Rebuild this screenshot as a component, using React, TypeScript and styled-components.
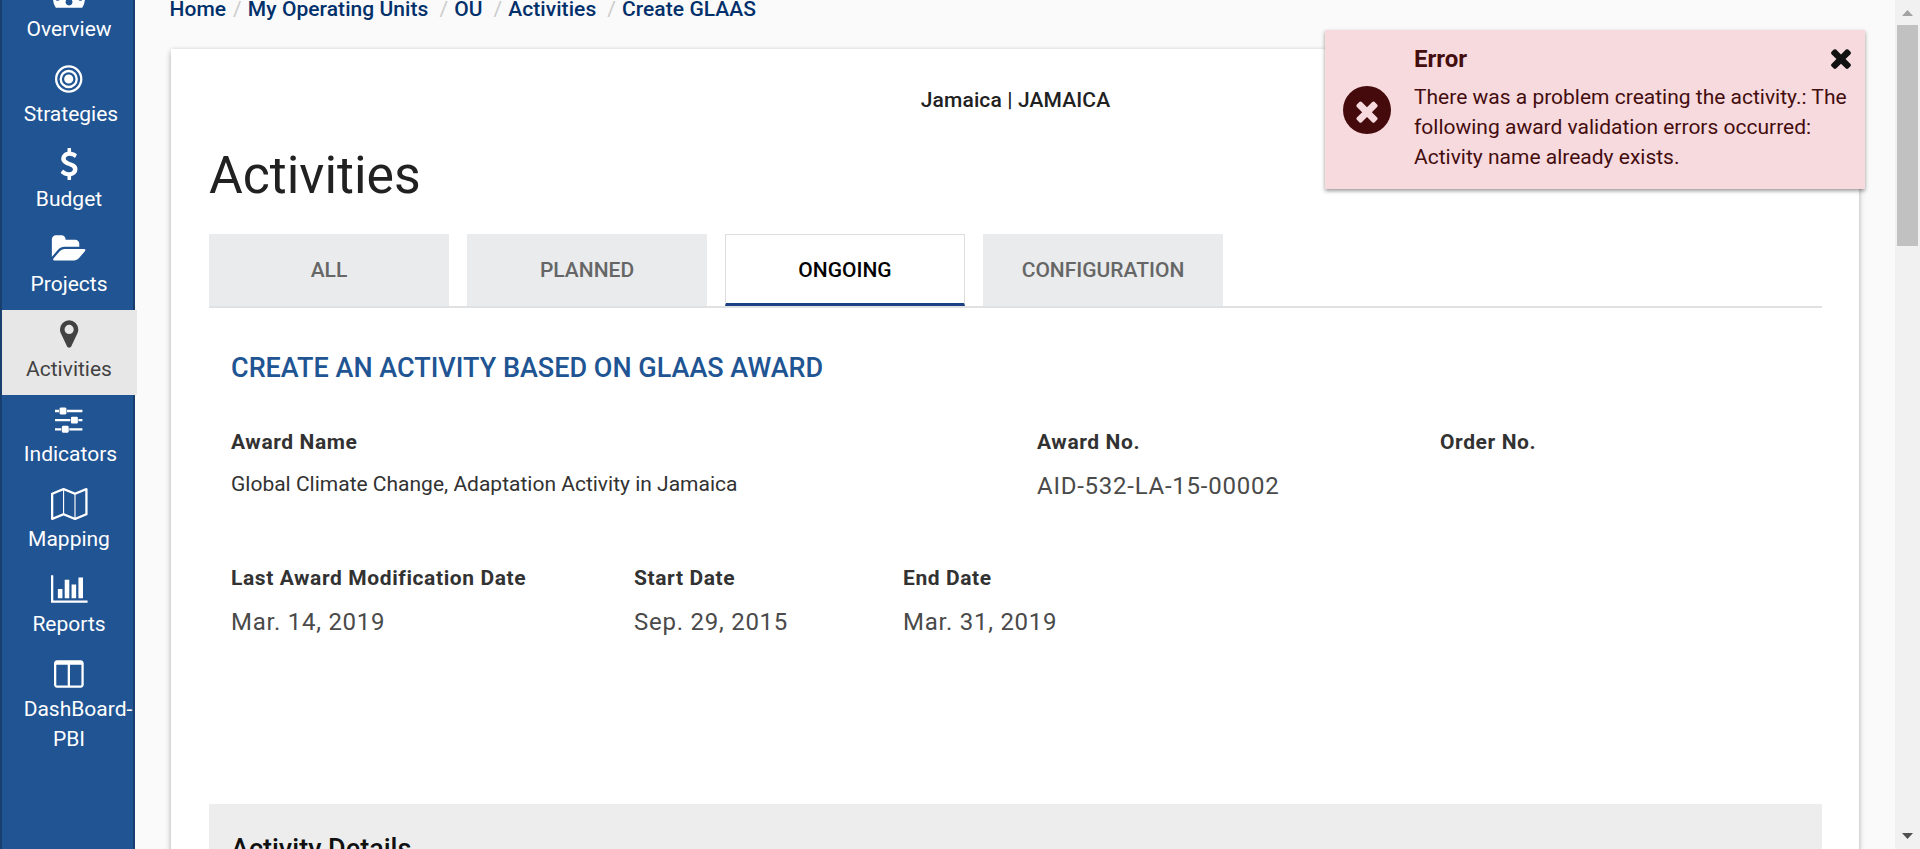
import React from "react";
import styled, { createGlobalStyle, css } from "styled-components";

const GlobalStyle = createGlobalStyle`
  *, *::before, *::after { box-sizing: border-box; }
  html, body { margin: 0; padding: 0; overflow: hidden; background: #fafafa; }
  body { font-family: Roboto, "Liberation Sans", sans-serif; font-size: 21px; line-height: 30px; color: #212121; }
  h1, h2, h3, p, ul, dl, dd { margin: 0; padding: 0; font-weight: 400; }
  a { color: inherit; text-decoration: none; }
`;

const Shell = styled.div`
  position: relative;
  display: flex;
  height: 849px;
  overflow: hidden;
`;

const Sidebar = styled.nav`
  flex: none;
  width: 135px;
  background: #205493;
  border: solid #193e70;
  border-width: 0 2px;
`;

const NavList = styled.ul`
  list-style: none;
  margin-top: -30px;
`;

const NavItem = styled.li<{ $active?: boolean; $tall?: boolean }>`
  display: flex;
  flex-direction: column;
  align-items: center;
  width: 135px;
  height: ${(p) => (p.$tall ? 115 : 85)}px;
  padding: 8px 1px 0 0;
  color: #fff;
  text-align: center;
  ${(p) =>
    p.$active &&
    css`
      background: #e7e7e7;
      color: #424242;
    `}
`;

const NavIcon = styled.svg`
  flex: none;
  display: block;
  height: 32px;
  overflow: visible;
  fill: currentColor;
`;

const NavLabel = styled.span<{ $shift?: number }>`
  margin-top: 4px;
  padding-left: ${(p) => p.$shift ?? 0}px;
  font-size: 21px;
  line-height: 30px;
`;

const Main = styled.main`
  flex: 1;
  min-width: 0;
  padding: 0 36px 0 36px;
`;

const Breadcrumbs = styled.div`
  display: flex;
  height: 30px;
  margin: -6px 0 25px -1.5px;
  color: #112e51;
  font-weight: 500;
  white-space: pre;
  letter-spacing: 0.06px;
`;

const Crumb = styled.a`
  color: #02306b;
`;

const CrumbSlash = styled.span<{ $before: number; $after: number }>`
  padding: 0 ${(p) => p.$after}px 0 ${(p) => p.$before}px;
  color: #ccc;
  font-weight: 400;
`;

const Card = styled.section`
  height: 900px;
  padding: 34px 37px 0 38px;
  background: #fff;
  box-shadow: 0 3px 6px rgba(0, 0, 0, 0.24), 0 0 4px rgba(0, 0, 0, 0.1);
`;

const UnitName = styled.p`
  height: 34px;
  text-align: center;
  font-size: 21px;
  line-height: 34px;
  font-weight: 500;
  letter-spacing: 0.12px;
`;

const PageTitle = styled.h1`
  height: 72px;
  margin-top: 23px;
  font-size: 51.75px;
  line-height: 71px;
`;

const TabBar = styled.div`
  display: flex;
  gap: 18px;
  height: 74px;
  margin-top: 22px;
  border-bottom: 2px solid #e0e1e2;
`;

const Tab = styled.div<{ $active?: boolean }>`
  display: flex;
  align-items: center;
  justify-content: center;
  width: 240px;
  height: 72px;
  background: #e9ebec;
  color: #666;
  font-size: 21px;
  font-weight: 500;
  ${(p) =>
    p.$active &&
    css`
      padding-top: 2px;
      background: #fff;
      color: #000;
      border: 1px solid #ddd;
      border-bottom: 3px solid #1b4084;
    `}
`;

const FormTitle = styled.h2`
  height: 40px;
  margin: 40px 0 0 22px;
  color: #205493;
  font-size: 27px;
  line-height: 40px;
  font-weight: 500;
`;

const Fields = styled.dl<{ $columns: string }>`
  display: grid;
  grid-template-columns: ${(p) => p.$columns};
  height: 136px;
  padding-left: 22px;
`;

const FirstFields = styled(Fields)`
  margin-top: 39px;
`;

const Label = styled.dt`
  height: 30px;
  color: #323232;
  font-size: 21px;
  line-height: 30px;
  font-weight: 700;
  letter-spacing: 0.6px;
`;

const Value = styled.dd<{ $plain?: boolean }>`
  margin-top: ${(p) => (p.$plain ? 12 : 14)}px;
  color: ${(p) => (p.$plain ? "#323232" : "#4a4a4a")};
  font-size: ${(p) => (p.$plain ? 21 : 24)}px;
  line-height: 30px;
  letter-spacing: ${(p) => (p.$plain ? 0 : 0.75)}px;
`;

const Details = styled.section`
  height: 120px;
  margin-top: 105px;
  padding: 25px 22px;
  background: #ededed;
`;

const DetailsTitle = styled.h3`
  color: #111;
  font-size: 27px;
  line-height: 40px;
  font-weight: 500;
`;

const Scrollbar = styled.div`
  flex: none;
  display: flex;
  flex-direction: column;
  align-items: center;
  width: 25px;
  background: #f1f1f1;
`;

const Arrow = styled.svg`
  flex: none;
  width: 25px;
  height: 25px;
`;

const Thumb = styled.div`
  width: 21px;
  height: 221px;
  margin-bottom: auto;
  background: #c1c1c1;
`;

const Toast = styled.aside`
  position: absolute;
  top: 30px;
  left: 1325px;
  display: flex;
  width: 540px;
  height: 159px;
  padding: 13px 14px 0 18px;
  background: #f7dade;
  color: #440d0e;
  box-shadow: 0 2px 4px rgba(0, 0, 0, 0.4);
`;

const ErrorBadge = styled.div`
  flex: none;
  display: flex;
  align-items: center;
  justify-content: center;
  width: 48px;
  height: 48px;
  margin: 43px 23px 0 0;
  padding-top: 1px;
  border-radius: 50%;
  background: #440a0c;
  color: #f7dade;
`;

const Cross = styled.svg<{ $size: number }>`
  width: ${(p) => p.$size}px;
  height: ${(p) => p.$size}px;
  fill: currentColor;
`;

const ToastBody = styled.div`
  flex: 1;
`;

const ToastHead = styled.div`
  display: flex;
  justify-content: space-between;
  align-items: center;
  height: 32px;
  margin-bottom: 7px;
`;

const ToastTitle = styled.strong`
  font-size: 24px;
  font-weight: 700;
`;

const CloseButton = styled.span`
  display: flex;
  margin: -2px -5px 0 0;
  color: #111;
`;

const ToastText = styled.p`
  font-size: 21px;
  line-height: 30px;
  white-space: nowrap;
`;

const TIMES =
  "M1490 1322q0 40-28 68l-136 136q-28 28-68 28t-68-28l-294-294-294 294q-28 28-68 28t-68-28l-136-136q-28-28-28-68t28-68l294-294-294-294q-28-28-28-68t28-68l136-136q28-28 68-28t68 28l294 294 294-294q28-28 68-28t68 28l136 136q28 28 28 68t-28 68l-294 294 294 294q28 28 28 68z";

type NavEntry = { label: string; width: number; path: string; shift?: number; active?: boolean; lines?: string[] };

const nav: NavEntry[] = [
  {
    label: "Overview",
    width: 1792,
    path: "M384 1152q0-53-37.5-90.5t-90.5-37.5-90.5 37.5-37.5 90.5 37.5 90.5 90.5 37.5 90.5-37.5 37.5-90.5zM576 704q0-53-37.5-90.5t-90.5-37.5-90.5 37.5-37.5 90.5 37.5 90.5 90.5 37.5 90.5-37.5 37.5-90.5zM1004 1185l101-382q6-26-7.5-48.5t-38.5-29.500-48 6.500-30 39.500l-101 382q-60 5-107 43.500t-63 98.500q-20 77 20 146t117 89 146-20 89-117q16-60-6-117t-72-91zM1664 1152q0-53-37.5-90.5t-90.5-37.5-90.5 37.5-37.5 90.5 37.5 90.5 90.5 37.5 90.5-37.5 37.5-90.5zM1792 1152q0 261-141 483-19 29-54 29h-1402q-35 0-54-29-141-221-141-483 0-182 71-348t191-286 286-191 348-71 348 71 286 191 191 286 71 348z",
  },
  {
    label: "Strategies",
    width: 1536,
    shift: 4,
    path: "M1024 896a256 256 0 1 1-512 0a256 256 0 1 1 512 0zM768 512a384 384 0 1 0 0 768a384 384 0 1 0 0-768zM768 384a512 512 0 1 1 0 1024a512 512 0 1 1 0-1024zM768 256a640 640 0 1 0 0 1280a640 640 0 1 0 0-1280zM768 128a768 768 0 1 1 0 1536a768 768 0 1 1 0-1536z",
  },
  {
    label: "Budget",
    width: 1024,
    path: "M978 1185q0 153-99.5 263.5t-258.5 136.5v175q0 14-9 23t-23 9h-135q-13 0-22.5-9.5t-9.5-22.5v-175q-66-9-127.5-31t-101.5-44.5-74-48-46.5-37.5-17.5-18q-17-21-2-41l103-135q7-10 23-12 15-2 24 9l2 2q113 99 243 125 37 8 74 8 81 0 142.5-43t61.5-122q0-28-15-53t-33.5-42-58.5-37.5-66-32-80-32.5q-39-16-61.5-25t-61.5-26.5-62.5-31-56.5-35.5-53.5-42.5-43.5-49-35.5-58-21-66.5-8.5-78q0-138 98-242t255-134v-180q0-13 9.5-22.5t22.5-9.5h135q14 0 23 9t9 23v176q57 6 110.5 23t87 33.5 63.5 37.5 39 29 15 14q17 18 5 38l-81 146q-8 15-23 16-14 3-27-7-3-3-14.5-12t-39-26.5-58.5-32-74.5-26-85.5-11.5q-95 0-155 43t-60 111q0 26 8.5 48t29.5 41.5 39.5 33 56 31 60.5 27 70 27.5q53 20 81 31.5t76 35 75.5 42.5 62 50 53 63.5 31.5 76.5 13 94z",
  },
  {
    label: "Projects",
    width: 1792,
    path: "M1815 952q0 31-31 66l-336 396q-43 51-120.5 86.5t-143.500 35.5h-1088q-34 0-60.5-13t-26.5-43q0-31 31-66l336-396q43-51 120.5-86.5t143.5-35.5h1088q34 0 60.5 13t26.5 43zM1472 608v160h-832q-94 0-197 47.5t-164 119.5l-337 396-5 6q0-4-.5-12.500t-.5-12.500v-960q0-92 66-158t158-66h320q92 0 158 66t66 158v32h544q92 0 158 66t66 158z",
  },
  {
    label: "Activities",
    width: 1024,
    active: true,
    path: "M768 640q0-106-75-181t-181-75-181 75-75 181 75 181 181 75 181-75 75-181zM1024 640q0 109-33 179l-364 774q-16 33-47.5 52t-67.5 19-67.5-19-46.5-52l-365-774q-33-70-33-179 0-212 150-362t362-150 362 150 150 362z",
  },
  {
    label: "Indicators",
    width: 1536,
    shift: 3,
    path: "M352 1408v128h-352v-128h352zM704 1280q26 0 45 19t19 45v256q0 26-19 45t-45 19h-256q-26 0-45-19t-19-45v-256q0-26 19-45t45-19h256zM864 896v128h-864v-128h864zM224 384v128h-224v-128h224zM1536 1408v128h-736v-128h736zM576 256q26 0 45 19t19 45v256q0 26-19 45t-45 19h-256q-26 0-45-19t-19-45v-256q0-26 19-45t45-19h256zM1216 768q26 0 45 19t19 45v256q0 26-19 45t-45 19h-256q-26 0-45-19t-19-45v-256q0-26 19-45t45-19h256zM1536 896v128h-224v-128h224zM1536 384v128h-864v-128h864z",
  },
  {
    label: "Mapping",
    width: 2048,
    path: "M2020 11q28 20 28 53v1408q0 20-11 36t-29 23l-640 256q-24 11-48 0l-616-246-616 246q-10 5-24 5-19 0-36-11-28-20-28-53v-1408q0-20 11-36t29-23l640-256q24-11 48 0l616 246 616-246q32-13 60 6zM736 146v1270l576 230v-1270zM128 363v1270l544-217v-1270zM1920 1429v-1270l-544 217v1270z",
  },
  {
    label: "Reports",
    width: 2048,
    path: "M640 896v512h-256v-512h256zM1024 384v1024h-256v-1024h256zM2048 1536v128h-2048v-1536h128v1408h1920zM1408 640v768h-256v-768h256zM1792 256v1152h-256v-1152h256z",
  },
  {
    label: "DashBoard-PBI",
    width: 1664,
    lines: ["DashBoard-", "PBI"],
    path: "M160 1536h608v-1152h-640v1120q0 13 9.5 22.5t22.5 9.5zM1536 1504v-1120h-640v1152h608q13 0 22.5-9.500t9.5-22.500zM1664 288v1216q0 66-47 113t-113 47h-1344q-66 0-113-47t-47-113v-1216q0-66 47-113t113-47h1344q66 0 113 47t47 113z",
  },
];

export default function App() {
  return (
    <>
      <GlobalStyle />
      <Shell>
        <Sidebar>
          <NavList>
            {nav.map((n) => (
              <NavItem key={n.label} $active={n.active} $tall={!!n.lines}>
                <NavIcon viewBox={`0 0 ${n.width} 1792`} width={(n.width * 32) / 1792}>
                  <path d={n.path} fillRule="evenodd" />
                </NavIcon>
                {n.lines ? (
                  <>
                    <NavLabel $shift={18}>{n.lines[0]}</NavLabel>
                    <span>{n.lines[1]}</span>
                  </>
                ) : (
                  <NavLabel $shift={n.shift}>{n.label}</NavLabel>
                )}
              </NavItem>
            ))}
          </NavList>
        </Sidebar>

        <Main>
          <Breadcrumbs>
            <Crumb>Home</Crumb>
            <CrumbSlash $before={7} $after={6}>/</CrumbSlash>
            <Crumb>My Operating Units</Crumb>
            <CrumbSlash $before={11} $after={6}>/</CrumbSlash>
            <Crumb>OU</Crumb>
            <CrumbSlash $before={11} $after={6}>/</CrumbSlash>
            <Crumb>Activities</Crumb>
            <CrumbSlash $before={11} $after={6}>/</CrumbSlash>
            <Crumb>Create GLAAS</Crumb>
          </Breadcrumbs>

          <Card>
            <UnitName>Jamaica | JAMAICA</UnitName>
            <PageTitle>Activities</PageTitle>
            <TabBar>
              <Tab>ALL</Tab>
              <Tab>PLANNED</Tab>
              <Tab $active>ONGOING</Tab>
              <Tab>CONFIGURATION</Tab>
            </TabBar>

            <FormTitle>CREATE AN ACTIVITY BASED ON GLAAS AWARD</FormTitle>
            <FirstFields $columns="806px 403px 1fr">
              <div>
                <Label>Award Name</Label>
                <Value $plain>Global Climate Change, Adaptation Activity in Jamaica</Value>
              </div>
              <div>
                <Label>Award No.</Label>
                <Value>AID-532-LA-15-00002</Value>
              </div>
              <div>
                <Label>Order No.</Label>
              </div>
            </FirstFields>
            <Fields $columns="403px 269px 1fr">
              <div>
                <Label>Last Award Modification Date</Label>
                <Value>Mar. 14, 2019</Value>
              </div>
              <div>
                <Label>Start Date</Label>
                <Value>Sep. 29, 2015</Value>
              </div>
              <div>
                <Label>End Date</Label>
                <Value>Mar. 31, 2019</Value>
              </div>
            </Fields>

            <Details>
              <DetailsTitle>Activity Details</DetailsTitle>
            </Details>
          </Card>
        </Main>

        <Scrollbar>
          <Arrow viewBox="0 0 25 25">
            <path d="M7 16L12.500 10L18 16Z" fill="#a3a3a3" />
          </Arrow>
          <Thumb />
          <Arrow viewBox="0 0 25 25">
            <path d="M7 9L12.500 15L18 9Z" fill="#505050" />
          </Arrow>
        </Scrollbar>

        <Toast>
          <ErrorBadge>
            <Cross viewBox="0 0 1792 1792" $size={32}>
              <path d={TIMES} />
            </Cross>
          </ErrorBadge>
          <ToastBody>
            <ToastHead>
              <ToastTitle>Error</ToastTitle>
              <CloseButton>
                <Cross viewBox="0 0 1792 1792" $size={30}>
                  <path d={TIMES} />
                </Cross>
              </CloseButton>
            </ToastHead>
            <ToastText>
              There was a problem creating the activity.: The
              <br />
              following award validation errors occurred:
              <br />
              Activity name already exists.
            </ToastText>
          </ToastBody>
        </Toast>
      </Shell>
    </>
  );
}
